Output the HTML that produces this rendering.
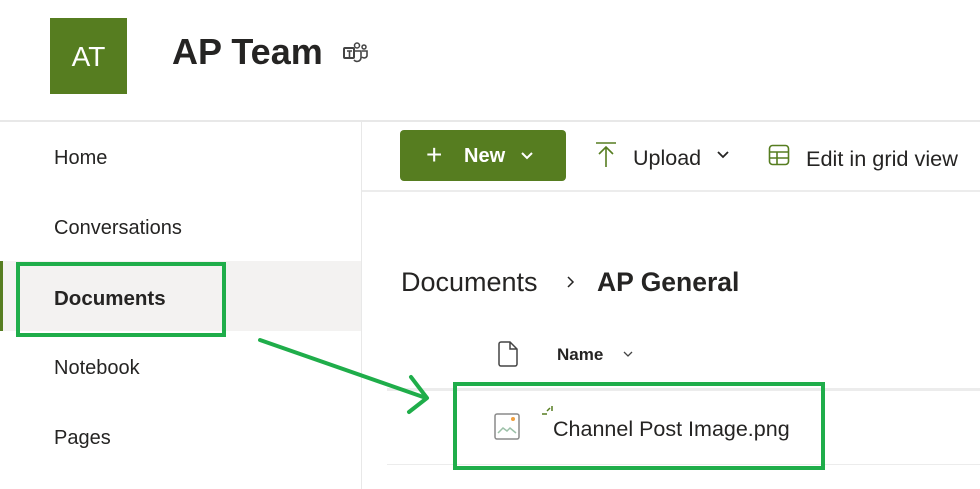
<!DOCTYPE html>
<html><head><meta charset="utf-8"><style>
body{margin:0;width:980px;height:489px;overflow:hidden;background:#fff;font-family:"Liberation Sans",sans-serif;color:#252423;position:relative}
.a{position:absolute}
.nav{left:54px;font-size:20px;color:#252423}
</style></head><body>
<div class="a" style="left:50px;top:18px;width:77px;height:76px;background:#567d20;color:#fff;font-size:28px;line-height:78px;text-align:center">AT</div>
<div class="a" style="left:172px;top:31px;font-size:36px;font-weight:bold;color:#252423">AP Team</div>
<svg class="a" style="left:343px;top:42px" width="26" height="22" viewBox="0 0 26 22"><rect x="1" y="6" width="10" height="10" rx="1" fill="none" stroke="#444" stroke-width="2"/><path d="M4 9h5M6.5 9v6" stroke="#444" stroke-width="1.6"/><circle cx="14" cy="3.5" r="2.5" fill="none" stroke="#444" stroke-width="1.5"/><circle cx="21" cy="5" r="2" fill="none" stroke="#444" stroke-width="1.5"/><path d="M11 9h7v7a4 4 0 0 1-7 2M19 9h5v5a3 3 0 0 1-5 1" fill="none" stroke="#444" stroke-width="1.6"/></svg>
<div class="a" style="left:0;top:120px;width:980px;height:2px;background:#e8e8e8"></div>
<div class="a" style="left:361px;top:122px;width:1px;height:367px;background:#e8e8e8"></div>
<div class="a" style="left:0;top:261px;width:361px;height:70px;background:#f3f2f1"></div>
<div class="a" style="left:0;top:261px;width:3px;height:70px;background:#567d20"></div>
<div class="a nav" style="top:147px">Home</div>
<div class="a nav" style="top:217px">Conversations</div>
<div class="a nav" style="top:287px;font-weight:bold;font-size:20.5px">Documents</div>
<div class="a nav" style="top:357px">Notebook</div>
<div class="a nav" style="top:427px">Pages</div>
<div class="a" style="left:16px;top:262px;width:202px;height:67px;border:4px solid #1fad4a"></div>
<div class="a" style="left:362px;top:190px;width:618px;height:2px;background:#ececec"></div>
<div class="a" style="left:400px;top:130px;width:166px;height:51px;background:#567d20;border-radius:4px;color:#fff;font-size:20px;font-weight:bold;line-height:53px"><span style="position:absolute;left:26px;font-weight:normal;font-size:28px;top:-2px">+</span><span style="position:absolute;left:64px">New</span><svg style="position:absolute;left:120px;top:21px" width="14" height="9"><path d="M2 2l5 5 5-5" stroke="#fff" stroke-width="2" fill="none"/></svg></div>
<svg class="a" style="left:594px;top:141px" width="24" height="28"><path d="M2 2h20M12 6v20M5 13l7-7 7 7" stroke="#567d20" stroke-width="1.6" fill="none"/></svg>
<div class="a" style="left:633px;top:146px;font-size:21.5px">Upload</div>
<svg class="a" style="left:716px;top:150px" width="14" height="9"><path d="M2 2l5 5 5-5" stroke="#252423" stroke-width="1.8" fill="none"/></svg>
<svg class="a" style="left:768px;top:144px" width="22" height="22"><rect x="1.5" y="1.5" width="19" height="19" rx="3" fill="none" stroke="#567d20" stroke-width="1.6"/><path d="M1.5 8h19M1.5 14h19M9 8v12.5" stroke="#567d20" stroke-width="1.6"/></svg>
<div class="a" style="left:806px;top:146px;font-size:21.7px">Edit in grid view</div>
<div class="a" style="left:401px;top:267px;font-size:27px">Documents</div>
<svg class="a" style="left:566px;top:275px" width="10" height="14"><path d="M2 2l5 5-5 5" stroke="#252423" stroke-width="1.5" fill="none"/></svg>
<div class="a" style="left:597px;top:267px;font-size:26.5px;font-weight:bold">AP General</div>
<svg class="a" style="left:497px;top:341px" width="22" height="26"><path d="M2 3a2 2 0 0 1 2-2h9l7 7v15a2 2 0 0 1-2 2H4a2 2 0 0 1-2-2z M13 1v7h7" stroke="#444" stroke-width="1.5" fill="none"/></svg>
<div class="a" style="left:557px;top:345px;font-size:17px;font-weight:bold">Name</div>
<svg class="a" style="left:622px;top:350px" width="12" height="8"><path d="M2 2l4 4 4-4" stroke="#444" stroke-width="1.3" fill="none"/></svg>
<div class="a" style="left:387px;top:388px;width:593px;height:3px;background:#ececec"></div>
<div class="a" style="left:387px;top:464px;width:593px;height:1px;background:#ececec"></div>
<svg class="a" style="left:494px;top:413px" width="28" height="28"><rect x="1" y="1" width="24" height="25" rx="2" fill="#fff" stroke="#8a8a8a" stroke-width="1.5"/><path d="M4 20l5-5 4 3 3-3 6 5" stroke="#9cc0a8" stroke-width="1.5" fill="none"/><circle cx="19" cy="6" r="2" fill="#f0a040"/></svg>
<svg class="a" style="left:540px;top:405px" width="14" height="14"><path d="M2 9h5M7 6l3-3M12 1v5" stroke="#567d20" stroke-width="1.5"/></svg>
<div class="a" style="left:553px;top:417px;font-size:21.5px">Channel Post Image.png</div>
<div class="a" style="left:453px;top:382px;width:364px;height:80px;border:4px solid #1fad4a"></div>
<svg class="a" style="left:0;top:0" width="980" height="489"><path d="M260 340L426 398M411 377L427 398L409 412" stroke="#1fad4a" stroke-width="4" fill="none" stroke-linecap="round" stroke-linejoin="round"/></svg>
</body></html>
